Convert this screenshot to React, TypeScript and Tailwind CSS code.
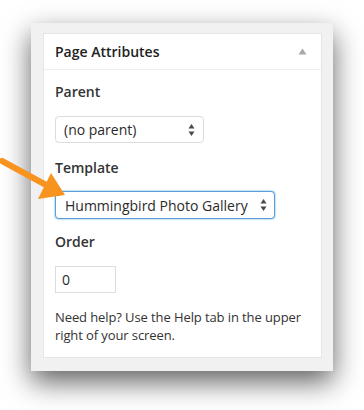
import React from "react";

// small up/down chevrons used by the fake selects
function SelectArrows() {
    return (
        <svg width="7" height="14" viewBox="0 0 7 14" className="shrink-0">
            <polygon points="3.5,1 6.5,5.5 0.5,5.5" fill="#4a4a4a" />
            <polygon points="3.5,13 6.5,8.5 0.5,8.5" fill="#4a4a4a" />
        </svg>
    );
}

function Label({ children }: { children: React.ReactNode }) {
    return <div className="text-[14px] leading-[20px] font-semibold text-[#333]">{children}</div>;
}

export default function App() {
    return (
        <div className="relative w-[364px] h-[410px] bg-white overflow-hidden font-['Open_Sans',sans-serif] text-[#333]">
            <div className="absolute left-0 top-0 pl-[31px] pt-[23px]">
                {/* Outer grey frame */}
                <div className="w-[302px] bg-[#f1f1f1] pt-[10px] pl-[12px] pr-[11px] pb-[13px] shadow-[0_11px_26px_rgba(0,0,0,0.62)]">
                    {/* Page Attributes box */}
                    <div className="bg-white border border-[#e5e5e5]">
                        <div className="h-[36px] flex items-center justify-between pl-[11px] pr-[14px] border-b border-[#eeeeee]">
                            <span className="text-[14px] font-semibold text-[#222]">Page Attributes</span>
                            <svg width="9" height="7" viewBox="0 0 9 7">
                                <polygon points="4.5,0.5 8.5,6.5 0.5,6.5" fill="#a9a9a9" />
                            </svg>
                        </div>

                        <div className="pl-[11px] pr-[12px] pt-[12px] pb-[13px]">
                            <Label>Parent</Label>
                            <div className="mt-[14px] w-[149px] h-[27px] rounded-[4px] border border-[#dcdcdc] flex items-center justify-between pl-[8px] pr-[8px] text-[14px] text-[#2b2b2b] bg-white">
                                <span>(no parent)</span>
                                <SelectArrows />
                            </div>

                            <div className="mt-[15px]">
                                <Label>Template</Label>
                            </div>
                            <div className="mt-[13px] w-[220px] h-[28px] rounded-[4px] border border-[#5b9dd9] shadow-[0_0_2px_rgba(30,140,190,0.8)] flex items-center justify-between pl-[9px] pr-[7px] text-[14px] text-[#2b2b2b] bg-white">
                                <span>Hummingbird Photo Gallery</span>
                                <SelectArrows />
                            </div>

                            <div className="mt-[13px]">
                                <Label>Order</Label>
                            </div>
                            <div className="mt-[14px] w-[61px] h-[27px] border border-[#dddddd] flex items-center pl-[6px] text-[14px] text-[#2b2b2b]">
                                0
                            </div>

                            <p className="mt-[15px] text-[13px] leading-[18px] tracking-[-0.1px] text-[#333]">
                                Need help? Use the Help tab in the upper right of your screen.
                            </p>
                        </div>
                    </div>
                </div>
            </div>

            {/* Orange callout arrow */}
            <svg className="absolute left-0 top-0" width="364" height="410" viewBox="0 0 364 410">
                <line x1="2" y1="161" x2="48" y2="186" stroke="#f7931e" strokeWidth="6" strokeLinecap="round" />
                <polygon points="65,195 38,199 51,173" fill="#f7931e" />
            </svg>
        </div>
    );
}
